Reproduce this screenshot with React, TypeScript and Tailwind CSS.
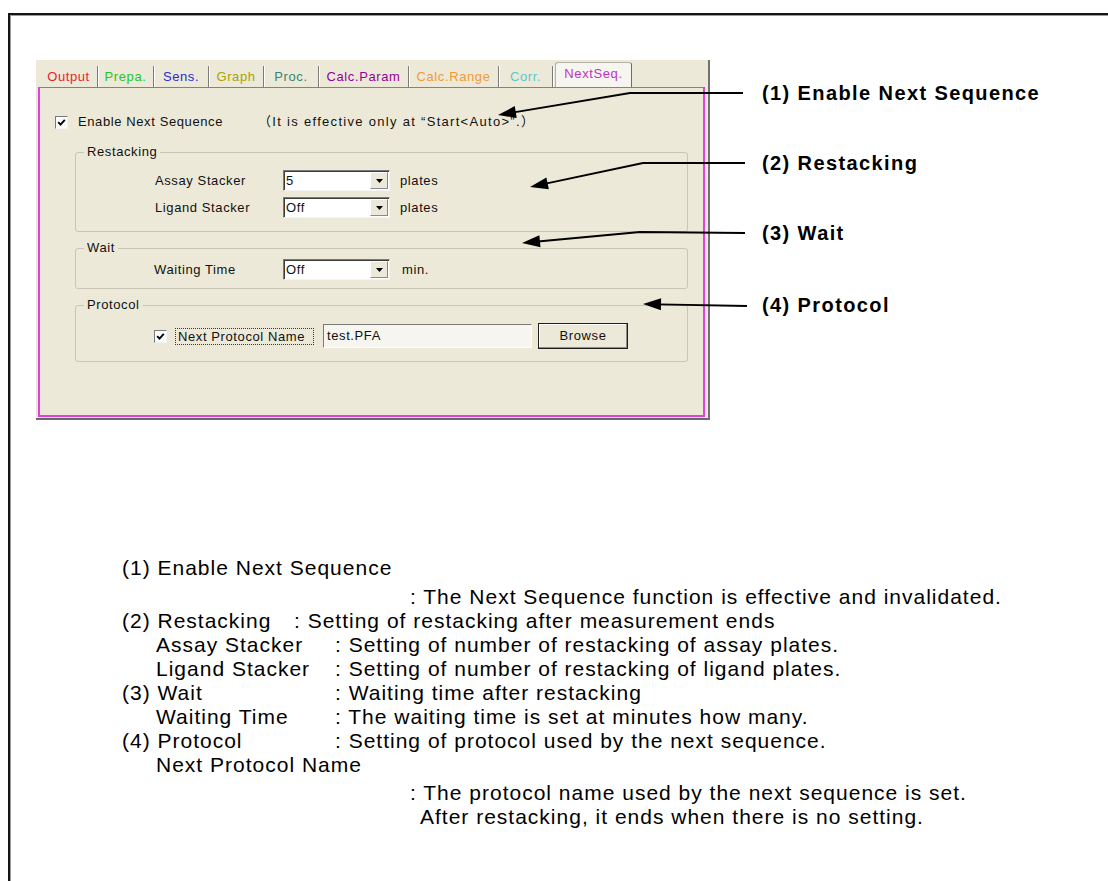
// Next Sequence settings page: dialog capture with callout arrows and a legend below.

const TABS = [
  { label: "Output", width: "w-[58px]", color: "text-[#e8262e]" },
  { label: "Prepa.", width: "w-[56px]", color: "text-[#22c822]" },
  { label: "Sens.", width: "w-[55px]", color: "text-[#2a2ad6]" },
  { label: "Graph", width: "w-[55px]", color: "text-[#aaa400]" },
  { label: "Proc.", width: "w-[55px]", color: "text-[#2f8878]" },
  { label: "Calc.Param", width: "w-[90px]", color: "text-[#960096]" },
  { label: "Calc.Range", width: "w-[90px]", color: "text-[#f39a32]" },
  { label: "Corr.", width: "w-[54px]", color: "text-[#5cc6cf]" },
];

const CALLOUTS: [number, number][][] = [
  [[743, 93], [630, 93], [498, 115]],
  [[745, 163], [643, 163], [530, 187]],
  [[745, 233], [640, 232], [522, 243]],
  [[747, 306], [643, 304]],
];

function CheckBox() {
  return (
    <span className="inline-flex h-[13px] w-[13px] shrink-0 items-center justify-center border border-t-[#7a7a7a] border-l-[#7a7a7a] border-b-[#f4f4f4] border-r-[#f4f4f4] bg-[#fbfbfb]">
      <svg viewBox="0 0 9 9" className="h-[9px] w-[9px]">
        <path d="M1.2 4.2 L3.5 6.6 L7.8 1.8" stroke="#000" strokeWidth="1.9" fill="none" />
      </svg>
    </span>
  );
}

function Combo({ value }: { value: string }) {
  return (
    <div className="flex h-[21px] w-[107px] items-stretch border border-t-[#7a7a7a] border-l-[#7a7a7a] border-b-[#f4f4f4] border-r-[#f4f4f4] bg-white shadow-[inset_1px_1px_0_#3c3c3c]">
      <span className="flex-1 pl-[2px] pt-[1px] leading-[17px]">{value}</span>
      <span className="m-[1px] flex w-[18px] items-center justify-center border border-t-white border-l-white border-b-[#8a8a8a] border-r-[#8a8a8a] bg-[#ece9d8]">
        <svg viewBox="0 0 7 4" className="h-[4px] w-[7px]">
          <path d="M0 0 H7 L3.5 4 Z" fill="#000" />
        </svg>
      </span>
    </div>
  );
}

function Arrow({ pts }: { pts: [number, number][] }) {
  const [tx, ty] = pts[pts.length - 1];
  const [px, py] = pts[pts.length - 2];
  const len = Math.hypot(tx - px, ty - py);
  const ux = (tx - px) / len;
  const uy = (ty - py) / len;
  const bx = tx - ux * 18;
  const by = ty - uy * 18;
  const nx = -uy * 6;
  const ny = ux * 6;
  const line = [...pts.slice(0, -1), [bx + ux * 2, by + uy * 2]].map((p) => p.join(",")).join(" ");
  return (
    <g>
      <polyline points={line} fill="none" stroke="#000" strokeWidth="1.8" />
      <polygon points={`${tx},${ty} ${bx + nx},${by + ny} ${bx - nx},${by - ny}`} fill="#000" />
    </g>
  );
}

function SettingsPanel() {
  return (
    <div className="flex h-[360px] w-[674px] shrink-0 flex-col border-b-2 border-r-2 border-b-[#6a6a6a] border-r-[#727272] bg-[#ece9d8] font-['Liberation_Sans',Arial,sans-serif] text-[13px] tracking-[0.6px] text-[#111]">
      <div className="flex h-[27px] items-end pl-[4px]">
        {TABS.map((tab) => (
          <div
            key={tab.label}
            className={`flex h-[21px] items-center justify-center border-r border-r-[#7b7b7b] shadow-[1px_0_0_#ffffff] ${tab.width} ${tab.color}`}
          >
            {tab.label}
          </div>
        ))}
        <div className="ml-[2px] flex h-[25px] w-[77px] items-center justify-center rounded-t-[3px] border border-b-0 border-[#b5b2a6] border-r-[#6d6d6d] bg-[#f6f5f0] pb-[2px] text-[#c232c2]">
          NextSeq.
        </div>
      </div>

      <div className="ml-[2px] h-[330px] w-[667px] border-2 border-t border-[#e23ee2]">
        <div className="ml-[15px] mt-[26px] flex h-[16px] items-center">
          <CheckBox />
          <span className="ml-[10px] w-[180px]">Enable Next Sequence</span>
          <span className="font-['Liberation_Sans','Noto_Sans_CJK_JP',sans-serif] tracking-[1.3px]">{"（It is effective only at \u201cStart<Auto>\u201d.）"}</span>
        </div>

        <fieldset className="ml-[35px] mt-[14px] w-[613px] rounded-[3px] border border-[#c9c6b6] pb-[13px]">
          <legend className="ml-[8px] px-[3px] leading-[16px]">Restacking</legend>
          <div className="mt-[10px] flex items-center pl-[79px]">
            <span className="w-[128px]">Assay Stacker</span>
            <Combo value="5" />
            <span className="ml-[10px]">plates</span>
          </div>
          <div className="mt-[6px] flex items-center pl-[79px]">
            <span className="w-[128px]">Ligand Stacker</span>
            <Combo value="Off" />
            <span className="ml-[10px]">plates</span>
          </div>
        </fieldset>

        <fieldset className="ml-[35px] mt-[8px] w-[613px] rounded-[3px] border border-[#c9c6b6] pb-[8px]">
          <legend className="ml-[8px] px-[3px] leading-[16px]">Wait</legend>
          <div className="mt-[3px] flex items-center pl-[78px]">
            <span className="w-[129px]">Waiting Time</span>
            <Combo value="Off" />
            <span className="ml-[12px]">min.</span>
          </div>
        </fieldset>

        <fieldset className="ml-[35px] mt-[8px] w-[613px] rounded-[3px] border border-[#c9c6b6] pb-[12px]">
          <legend className="ml-[8px] px-[3px] leading-[16px]">Protocol</legend>
          <div className="mt-[10px] flex h-[26px] items-center pl-[78px]">
            <CheckBox />
            <span className="ml-[8px] w-[139px] border border-dotted border-[#3a3a3a] px-[2px] leading-[15px]">Next Protocol Name</span>
            <span className="ml-[9px] h-[24px] w-[209px] border border-t-[#7a7a7a] border-l-[#7a7a7a] border-b-white border-r-white bg-[#f6f5ef] pl-[3px] leading-[22px]">
              test.PFA
            </span>
            <button
              type="button"
              className="ml-[6px] h-[26px] w-[90px] border border-[#1e1e1e] bg-[#ece9d8] text-center shadow-[inset_-1px_-1px_0_#8a8a8a,inset_1px_1px_0_#ffffff]"
            >
              Browse
            </button>
          </div>
        </fieldset>
      </div>
    </div>
  );
}

export default function App() {
  return (
    <div className="relative h-[881px] w-[1108px] overflow-hidden bg-white">
      <div className="ml-[8px] mt-[13px] h-[900px] border-l-2 border-t-2 border-[#141414] shadow-[inset_1px_1px_0_#9a9a9a]">
        <div className="ml-[26px] mt-[45px] flex">
          <SettingsPanel />
          <div className="ml-[52px] pt-[21px] font-['Liberation_Sans',Arial,sans-serif] text-[20px] font-bold leading-[24px] tracking-[1.4px] text-black">
            <p>(1) Enable Next Sequence</p>
            <p className="mt-[46px]">(2) Restacking</p>
            <p className="mt-[46px]">(3) Wait</p>
            <p className="mt-[48px]">(4) Protocol</p>
          </div>
        </div>

        <div className="ml-[112px] mt-[136px] font-['Liberation_Sans',Arial,sans-serif] text-[21px] leading-[24px] tracking-[1px] text-black">
          <p>(1) Enable Next Sequence</p>
          <p className="mt-[5px] pl-[288px]">: The Next Sequence function is effective and invalidated.</p>
          <div className="flex">
            <span className="w-[172px] shrink-0">(2) Restacking</span>
            <span>: Setting of restacking after measurement ends</span>
          </div>
          <div className="flex">
            <span className="w-[213px] shrink-0 pl-[34px]">Assay Stacker</span>
            <span>: Setting of number of restacking of assay plates.</span>
          </div>
          <div className="flex">
            <span className="w-[213px] shrink-0 pl-[34px]">Ligand Stacker</span>
            <span>: Setting of number of restacking of ligand plates.</span>
          </div>
          <div className="flex">
            <span className="w-[213px] shrink-0">(3) Wait</span>
            <span>: Waiting time after restacking</span>
          </div>
          <div className="flex">
            <span className="w-[213px] shrink-0 pl-[34px]">Waiting Time</span>
            <span>: The waiting time is set at minutes how many.</span>
          </div>
          <div className="flex">
            <span className="w-[213px] shrink-0">(4) Protocol</span>
            <span>: Setting of protocol used by the next sequence.</span>
          </div>
          <p className="pl-[34px]">Next Protocol Name</p>
          <p className="mt-[4px] pl-[288px]">: The protocol name used by the next sequence is set.</p>
          <p className="pl-[298px]">After restacking, it ends when there is no setting.</p>
        </div>
      </div>

      <svg className="pointer-events-none absolute left-0 top-0" width="1108" height="881">
        {CALLOUTS.map((pts, i) => (
          <Arrow key={i} pts={pts} />
        ))}
      </svg>
    </div>
  );
}
